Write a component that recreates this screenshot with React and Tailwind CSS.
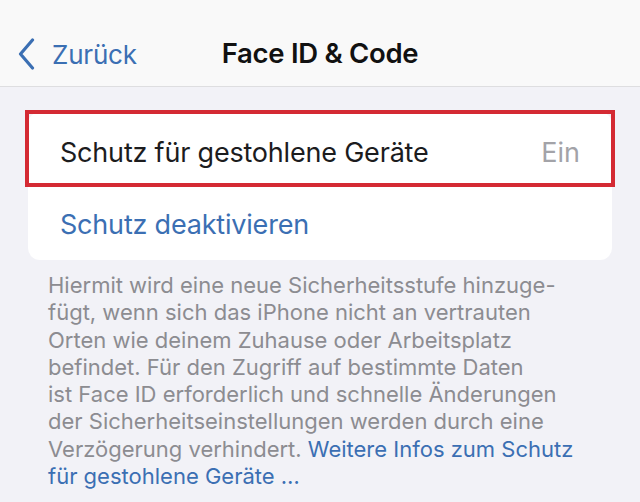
export default function App() {
  return (
    <div
      className="w-[640px] h-[502px] overflow-hidden bg-[#f2f2f7] antialiased"
      style={{ fontFamily: "Inter, 'Noto Sans', sans-serif" }}
    >
      {/* nav bar */}
      <div className="h-[87px] pt-[22px] bg-[#f9f9f9] border-b border-[#dedee0] grid grid-cols-[1fr_auto_1fr] items-center">
        <div className="flex items-center pl-[18px] text-[#3b6fb3]">
          <svg width="17" height="32" viewBox="0 0 17 32" fill="none">
            <path
              d="M14.5 2 L2.5 16 L14.5 30"
              stroke="currentColor"
              strokeWidth="3.2"
              strokeLinecap="round"
              strokeLinejoin="round"
            />
          </svg>
          <span className="ml-[17px] text-[26px] tracking-[-0.2px]">Zurück</span>
        </div>
        <h1 className="text-[27.5px] font-semibold text-[#111] tracking-[-0.3px]">
          Face ID &amp; Code
        </h1>
        <div />
      </div>

      {/* settings group */}
      <div className="px-[28px] pt-[25px]">
        <div className="bg-white rounded-[12px]">
          <div className="relative h-[75px] pt-[7px] px-[32px] flex items-center justify-between">
            <span className="text-[27px] text-[#1c1c1e] tracking-[-0.2px]">
              Schutz für gestohlene Geräte
            </span>
            <span className="text-[27px] text-[#a3a3a8]">Ein</span>
            <div className="absolute -left-[3px] -right-[3px] -top-[2px] bottom-0 border-4 border-[#d42a33]" />
          </div>
          <div className="h-[73px] pt-[3px] px-[32px] flex items-center">
            <span className="text-[27px] text-[#3b6fb3] tracking-[-0.2px]">
              Schutz deaktivieren
            </span>
          </div>
        </div>
      </div>

      {/* footer note */}
      <p className="mt-[12px] pl-[48px] text-[22px] leading-[27.3px] text-[#8c8c91] whitespace-nowrap">
        Hiermit wird eine neue Sicherheitsstufe hinzuge-
        <br />
        fügt, wenn sich das iPhone nicht an vertrauten
        <br />
        Orten wie deinem Zuhause oder Arbeitsplatz
        <br />
        befindet. Für den Zugriff auf bestimmte Daten
        <br />
        ist Face ID erforderlich und schnelle Änderungen
        <br />
        der Sicherheitseinstellungen werden durch eine
        <br />
        Verzögerung verhindert.{" "}
        <span className="text-[#3b6fb3]">Weitere Infos zum Schutz</span>
        <br />
        <span className="text-[#3b6fb3]">für gestohlene Geräte …</span>
      </p>
    </div>
  );
}
